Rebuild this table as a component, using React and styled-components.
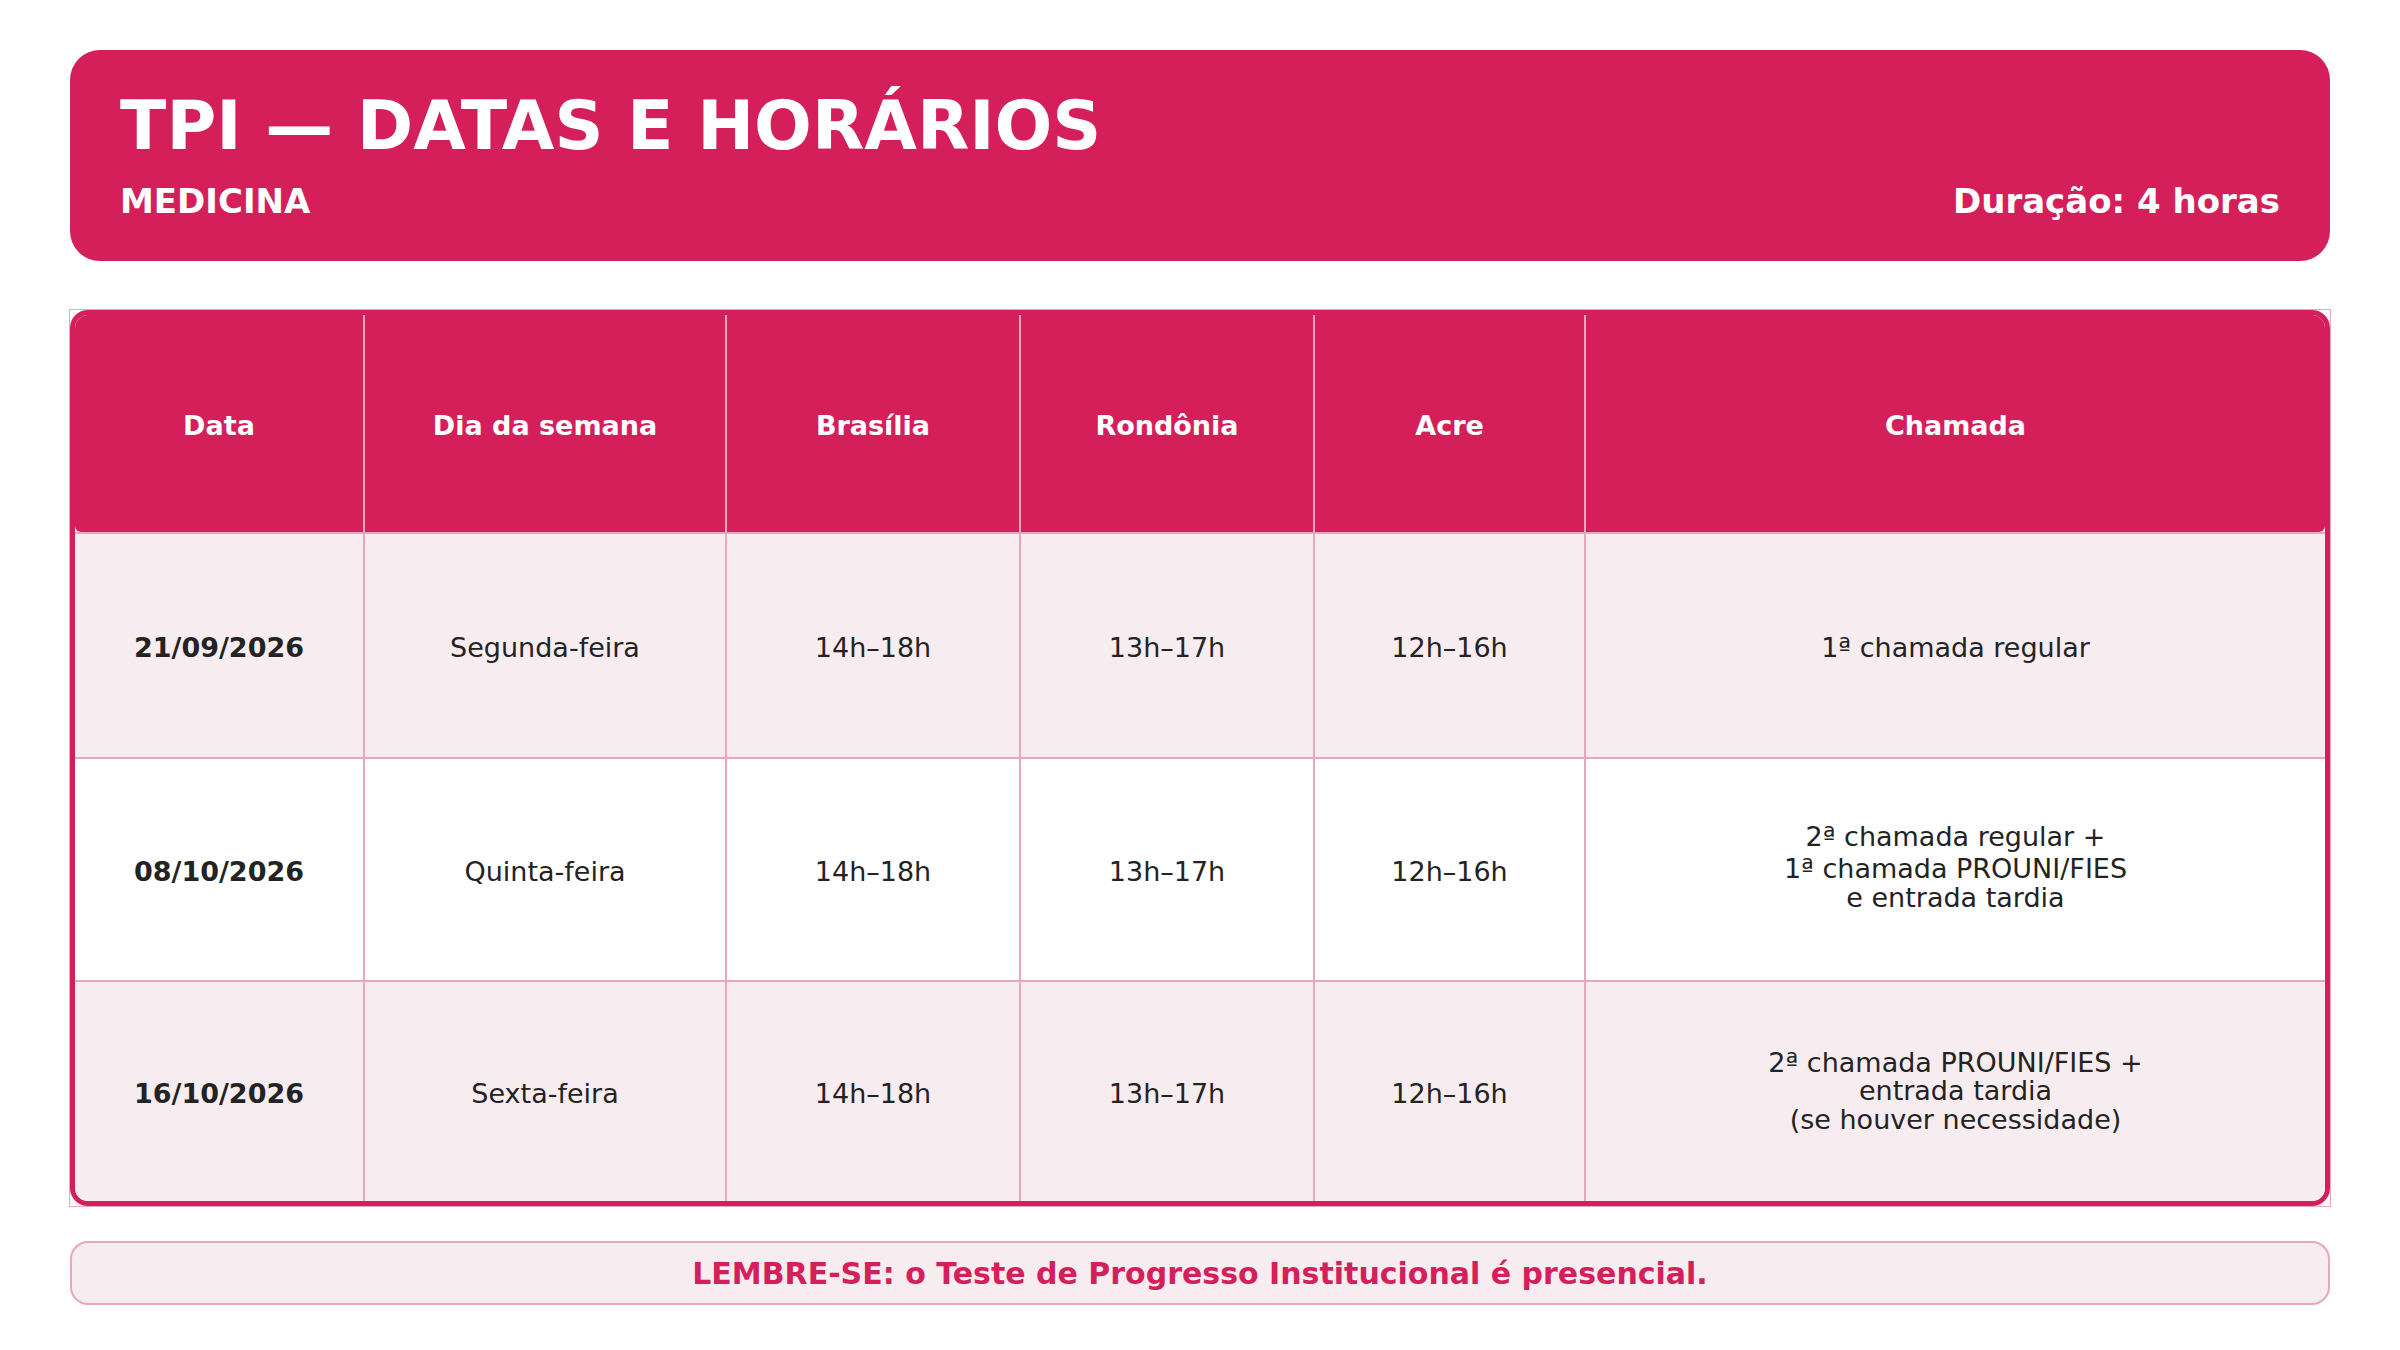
import React from "react";
import styled, { createGlobalStyle } from "styled-components";

const CRIMSON = "#d41f5b";
const PINK_LINE = "#e9a7bf";
const PINK_BG = "#f7ecf0";
const TEXT = "#232323";

const Global = createGlobalStyle`
  html, body { margin: 0; padding: 0; background: #ffffff; }
  body { font-family: "DejaVu Sans", "Noto Sans", sans-serif; color: ${TEXT}; }
  * { box-sizing: border-box; }
`;

const Page = styled.main`
  width: 2400px;
  min-height: 1350px;
  padding: 50px 70px 0;
  display: flex;
  flex-direction: column;
`;

const Banner = styled.header`
  background: ${CRIMSON};
  color: #ffffff;
  border-radius: 30px;
  padding: 36px 50px 40px;
`;

const Title = styled.h1`
  margin: 0;
  font-size: 68px;
  font-weight: 700;
  line-height: normal;
`;

const SubRow = styled.div`
  margin-top: 16px;
  display: flex;
  justify-content: space-between;
  font-size: 34px;
  font-weight: 700;
  line-height: normal;
`;

const TableFrame = styled.section`
  margin-top: 49px;
  outline: 1px solid ${PINK_LINE};
`;

const TableCard = styled.div`
  border: 5px solid ${CRIMSON};
  border-radius: 18px;
  overflow: hidden;
  background: #ffffff;
`;

const COLS = "288px 362px 294px 294px 271px 1fr";

const HeadRow = styled.div`
  display: grid;
  grid-template-columns: ${COLS};
  height: 217px;
  background: ${CRIMSON};
  color: #ffffff;
  border-radius: 0 0 6px 6px;
`;

const BodyRow = styled.div`
  display: grid;
  grid-template-columns: ${COLS};
  height: ${(p) => p.$h + 2}px;
  border-top: 2px solid ${PINK_LINE};
  background: ${(p) => (p.$tint ? PINK_BG : "#ffffff")};
`;

const Cell = styled.div`
  display: flex;
  align-items: center;
  justify-content: center;
  text-align: center;
  padding: ${(p) => (p.$multi ? "0 16px" : "4px 16px 0")};
  font-size: 27px;
  font-weight: ${(p) => (p.$bold ? 700 : 400)};
  line-height: ${(p) => (p.$multi ? "28.5px" : "normal")};
  & + & {
    border-left: 2px solid ${PINK_LINE};
  }
`;

const Lines = styled.div`
  display: flex;
  flex-direction: column;
  & > span:first-child {
    margin-top: ${(p) => (p.$split ? "-4px" : "0")};
    margin-bottom: ${(p) => (p.$split ? "4px" : "0")};
  }
`;

const Notice = styled.footer`
  margin-top: 35px;
  height: 64px;
  border: 2px solid ${PINK_LINE};
  border-radius: 18px;
  background: ${PINK_BG};
  color: ${CRIMSON};
  font-size: 30px;
  font-weight: 700;
  display: flex;
  align-items: center;
  justify-content: center;
`;

const headers = ["Data", "Dia da semana", "Brasília", "Rondônia", "Acre", "Chamada"];

const rows = [
  {
    date: "21/09/2026",
    day: "Segunda-feira",
    bsb: "14h–18h",
    ro: "13h–17h",
    ac: "12h–16h",
    call: ["1ª chamada regular"],
    h: 223,
    tint: true,
  },
  {
    date: "08/10/2026",
    day: "Quinta-feira",
    bsb: "14h–18h",
    ro: "13h–17h",
    ac: "12h–16h",
    call: ["2ª chamada regular +", "1ª chamada PROUNI/FIES", "e entrada tardia"],
    split: true,
    h: 221,
    tint: false,
  },
  {
    date: "16/10/2026",
    day: "Sexta-feira",
    bsb: "14h–18h",
    ro: "13h–17h",
    ac: "12h–16h",
    call: ["2ª chamada PROUNI/FIES +", "entrada tardia", "(se houver necessidade)"],
    h: 219,
    tint: true,
  },
];

export default function App() {
  return (
    <>
      <Global />
      <Page>
        <Banner>
          <Title>TPI — DATAS E HORÁRIOS</Title>
          <SubRow>
            <span>MEDICINA</span>
            <span>Duração: 4 horas</span>
          </SubRow>
        </Banner>

        <TableFrame>
          <TableCard>
            <HeadRow>
              {headers.map((h) => (
                <Cell key={h} $bold>
                  {h}
                </Cell>
              ))}
            </HeadRow>
            {rows.map((r) => (
              <BodyRow key={r.date} $h={r.h} $tint={r.tint}>
                <Cell $bold>{r.date}</Cell>
                <Cell>{r.day}</Cell>
                <Cell>{r.bsb}</Cell>
                <Cell>{r.ro}</Cell>
                <Cell>{r.ac}</Cell>
                <Cell $multi={r.call.length > 1}>
                  <Lines $split={r.split}>
                    {r.call.map((l) => (
                      <span key={l}>{l}</span>
                    ))}
                  </Lines>
                </Cell>
              </BodyRow>
            ))}
          </TableCard>
        </TableFrame>

        <Notice>LEMBRE-SE: o Teste de Progresso Institucional é presencial.</Notice>
      </Page>
    </>
  );
}
